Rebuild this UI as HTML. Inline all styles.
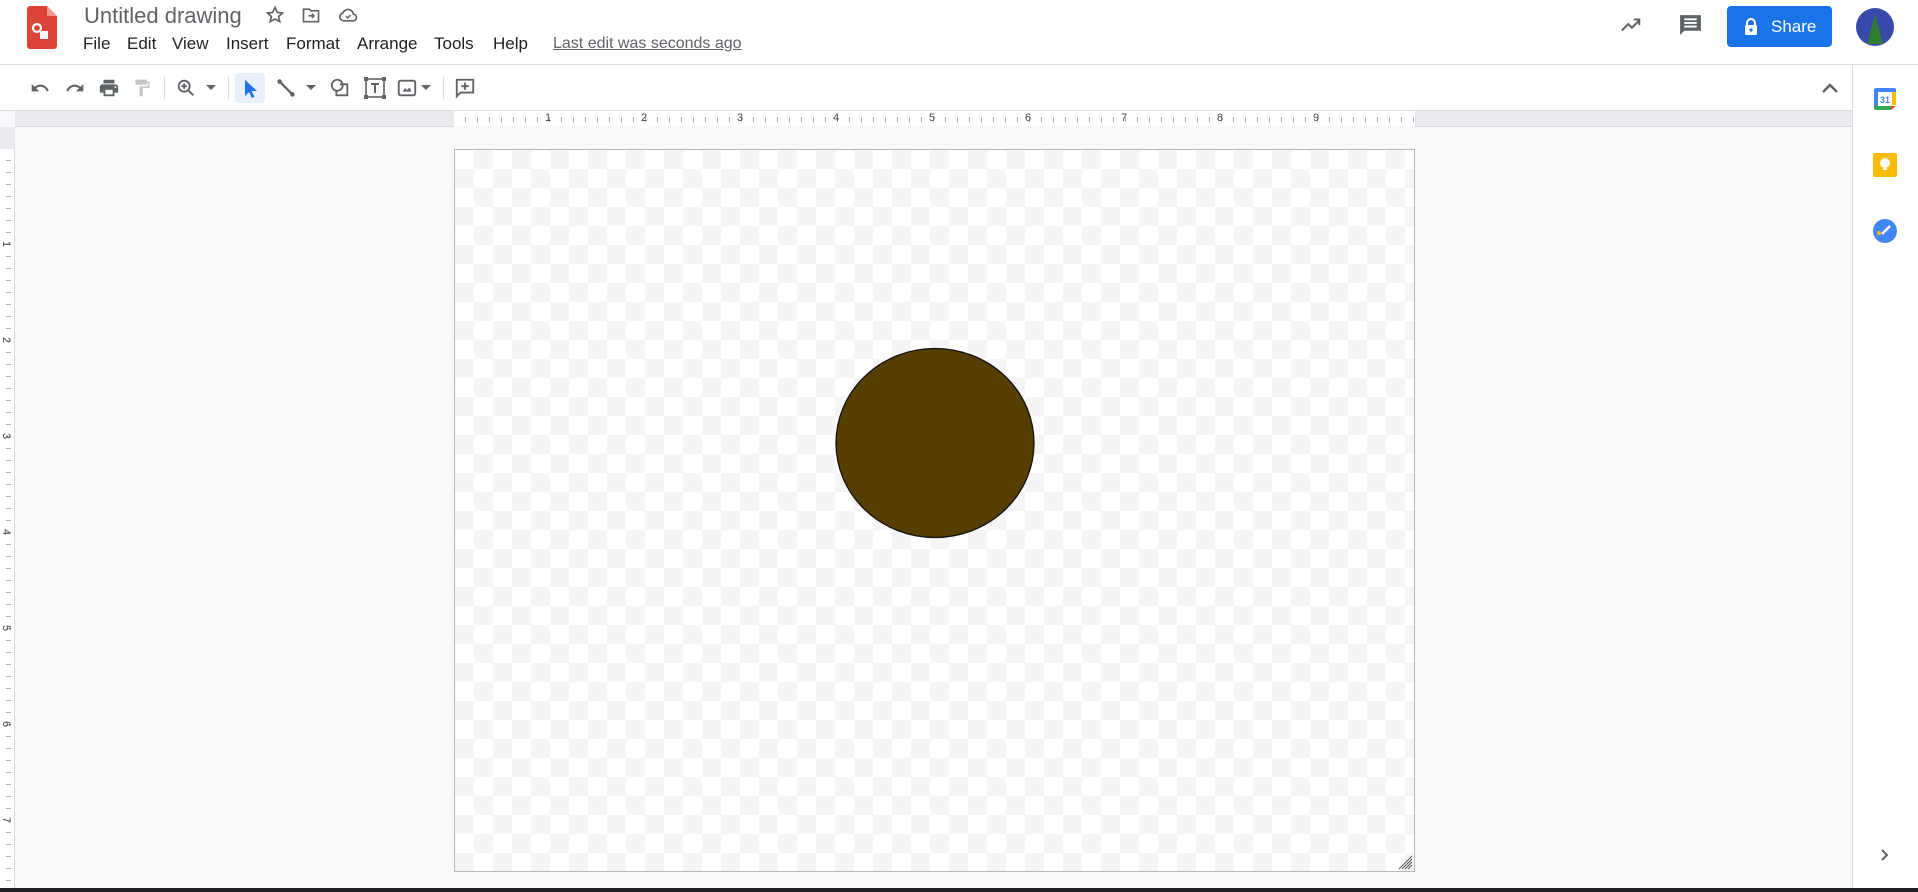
<!DOCTYPE html>
<html><head><meta charset="utf-8"><style>
*{margin:0;padding:0;box-sizing:border-box}
body{width:1918px;height:892px;overflow:hidden;background:#f8f9fa;font-family:"Liberation Sans",Arial,sans-serif;position:relative}
.abs{position:absolute}
#hdr{left:0;top:0;width:1918px;height:65px;background:#fff;border-bottom:1px solid #dadce0}
#tb{left:0;top:65px;width:1852px;height:46px;background:#fff;border-bottom:1px solid #dadce0}
.menu{top:34px;font-size:17px;color:#202124}
#rul{left:15px;top:111px;width:1837px;height:16px;background:#e8eaed;border-bottom:1px solid #dadce0}
#rulw{left:454px;top:111px;width:961px;height:16px;background:#fff repeating-linear-gradient(90deg,transparent 0 11px,#b0b0b0 11px 12px) ;background-size:12px 5px;background-repeat:repeat-x;background-position:0 6px}
.rn{font-size:11px;color:#444;top:112px}
#vr{left:0;top:127px;width:15px;height:761px;background:#fff;border-right:1px solid #dadce0}
.vn{font-size:11px;color:#444;left:3px;transform:rotate(90deg)}
#canvas{left:454px;top:149px;width:961px;height:723px;border:1px solid #b8b8b8;background-color:#fff;
background-image:linear-gradient(45deg,#f5f5f5 25%,transparent 25%,transparent 75%,#f5f5f5 75%),linear-gradient(45deg,#f5f5f5 25%,transparent 25%,transparent 75%,#f5f5f5 75%);
background-size:38px 38px;background-position:0 0,19px 19px}
#side{left:1852px;top:65px;width:66px;height:823px;background:#fff;border-left:1px solid #dadce0}
#bot{left:0;top:888px;width:1918px;height:4px;background:#202124}
.sep{width:1px;height:24px;background:#dadce0;top:76px}
</style></head><body>
<div id="hdr" class="abs"></div>
<svg class="abs" style="left:27px;top:6px" width="30" height="43" viewBox="0 0 30 43"><path d="M3 0h17l10 10v30a3 3 0 0 1-3 3H3a3 3 0 0 1-3-3V3a3 3 0 0 1 3-3z" fill="#db4437"/><path d="M20 0v10h10z" fill="#f19990"/><circle cx="10" cy="22" r="4" fill="none" stroke="#fff" stroke-width="2.2"/><rect x="13" y="25" width="8" height="8" fill="#fff"/></svg>
<div class="abs" style="left:84px;top:3px;font-size:22px;color:#5f6368">Untitled drawing</div>
<svg class="abs" style="left:265px;top:5px" width="20" height="20" viewBox="0 0 24 24"><path d="M12 3l2.8 6 6.2.6-4.7 4.2 1.4 6.2L12 16.8 6.3 20l1.4-6.2L3 9.6 9.2 9z" fill="none" stroke="#5f6368" stroke-width="2"/></svg>
<svg class="abs" style="left:301px;top:5px" width="20" height="20" viewBox="0 0 24 24"><path d="M3 5h7l2 2h9v13H3z" fill="none" stroke="#5f6368" stroke-width="2"/><path d="M9 13h6m-2-2.5L15.5 13 13 15.5" fill="none" stroke="#5f6368" stroke-width="2"/></svg>
<svg class="abs" style="left:337px;top:5px" width="22" height="20" viewBox="0 0 24 24"><path d="M7 19h11a4 4 0 0 0 .5-8A6.5 6.5 0 0 0 6 9.5 4.8 4.8 0 0 0 7 19z" fill="none" stroke="#5f6368" stroke-width="2"/><path d="M9.5 13.5l2 2 3.5-3.5" fill="none" stroke="#5f6368" stroke-width="1.8"/></svg>
<div class="abs menu" style="left:83px">File</div>
<div class="abs menu" style="left:127px">Edit</div>
<div class="abs menu" style="left:172px">View</div>
<div class="abs menu" style="left:226px">Insert</div>
<div class="abs menu" style="left:286px">Format</div>
<div class="abs menu" style="left:357px">Arrange</div>
<div class="abs menu" style="left:434px">Tools</div>
<div class="abs menu" style="left:493px">Help</div>
<div class="abs menu" style="left:553px;color:#5f6368;text-decoration:underline;font-size:16px;top:35px">Last edit was seconds ago</div>
<svg class="abs" style="left:1618px;top:14px" width="26" height="22" viewBox="0 0 24 24"><path d="M2 18l7-7 4 4 8-8M15 6h6v6" fill="none" stroke="#5f6368" stroke-width="2.2"/></svg>
<svg class="abs" style="left:1678px;top:13px" width="25" height="25" viewBox="0 0 24 24"><path d="M2 2h20v15H6l-4 4z" fill="#5f6368"/><path d="M6 6h12M6 9.5h12M6 13h12" stroke="#fff" stroke-width="1.8"/></svg>
<div class="abs" style="left:1727px;top:6px;width:105px;height:41px;background:#1a73e8;border-radius:4px;color:#fff;font-size:17px;line-height:41px;padding-left:44px">Share</div>
<svg class="abs" style="left:1744px;top:18px" width="14" height="17" viewBox="0 0 14 17"><path d="M3 7V5a4 4 0 0 1 8 0v2" fill="none" stroke="#fff" stroke-width="2"/><rect x="1" y="7" width="12" height="10" rx="1.5" fill="#fff"/><circle cx="7" cy="12" r="1.6" fill="#1a73e8"/></svg>
<div class="abs" style="left:1856px;top:8px;width:38px;height:38px;border-radius:50%;background:#3949ab;overflow:hidden"><div style="position:absolute;left:11px;top:6px;width:0;height:0;border-left:8px solid transparent;border-right:8px solid transparent;border-bottom:30px solid #2e7d32"></div></div>
<div id="tb" class="abs"></div>
<svg class="abs" style="left:29px;top:78px" width="22" height="20" viewBox="0 0 24 24"><path d="M12.5 8c-2.6 0-5 1-6.9 2.6L2 7v9h9l-3.6-3.6c1.4-1.2 3.2-1.9 5.1-1.9 3.5 0 6.5 2.3 7.6 5.5l2.4-.8C21 11 17.1 8 12.5 8z" fill="#5f6368"/></svg>
<svg class="abs" style="left:64px;top:78px" width="22" height="20" viewBox="0 0 24 24"><path d="M18.4 10.6C16.5 9 14.1 8 11.5 8 6.9 8 3 11 1.6 15.2l2.4.8c1.1-3.2 4.1-5.5 7.6-5.5 1.9 0 3.7.7 5.1 1.9L13 16h9V7z" fill="#5f6368"/></svg>
<svg class="abs" style="left:98px;top:77px" width="22" height="22" viewBox="0 0 24 24"><path d="M19 8H5c-1.7 0-3 1.3-3 3v6h4v4h12v-4h4v-6c0-1.7-1.3-3-3-3zm-3 11H8v-5h8zm3-7a1 1 0 1 1 0-2 1 1 0 0 1 0 2zM18 3H6v4h12z" fill="#5f6368"/></svg>
<svg class="abs" style="left:132px;top:77px" width="20" height="22" viewBox="0 0 24 24"><path d="M18 4V3c0-.6-.4-1-1-1H5c-.6 0-1 .4-1 1v4c0 .6.4 1 1 1h12c.6 0 1-.4 1-1V6h1v4H9v11c0 .6.4 1 1 1h2c.6 0 1-.4 1-1v-9h8V4z" fill="#c4c7c5"/></svg>
<div class="abs sep" style="left:164px"></div>
<svg class="abs" style="left:175px;top:77px" width="22" height="22" viewBox="0 0 24 24"><circle cx="10" cy="10" r="6" fill="none" stroke="#5f6368" stroke-width="2"/><path d="M14.5 14.5L20 20M10 7v6M7 10h6" stroke="#5f6368" stroke-width="2"/></svg>
<svg class="abs" style="left:206px;top:85px" width="10" height="6"><path d="M0 0h10L5 5z" fill="#5f6368"/></svg>
<div class="abs sep" style="left:228px"></div>
<div class="abs" style="left:235px;top:73px;width:30px;height:30px;background:#e8f0fe;border-radius:3px"></div>
<svg class="abs" style="left:243px;top:79px" width="16" height="20" viewBox="0 0 16 20"><path d="M2 1v16l4-4 3 6 2.5-1.2-3-5.8H14z" fill="#1a73e8"/></svg>
<svg class="abs" style="left:275px;top:77px" width="22" height="22" viewBox="0 0 24 24"><path d="M4 4l16 16" stroke="#5f6368" stroke-width="2.4"/><circle cx="5" cy="5" r="2.5" fill="#5f6368"/><circle cx="19" cy="19" r="2.5" fill="#5f6368"/></svg>
<svg class="abs" style="left:306px;top:85px" width="10" height="6"><path d="M0 0h10L5 5z" fill="#5f6368"/></svg>
<svg class="abs" style="left:329px;top:77px" width="22" height="22" viewBox="0 0 24 24"><circle cx="9" cy="9" r="6" fill="none" stroke="#5f6368" stroke-width="2"/><path d="M12 8h8v12H8v-5" fill="none" stroke="#5f6368" stroke-width="2"/></svg>
<svg class="abs" style="left:363px;top:76px" width="24" height="24" viewBox="0 0 24 24"><rect x="3" y="3" width="18" height="18" fill="none" stroke="#5f6368" stroke-width="1.6"/><path d="M8 8h8M12 8v9" stroke="#5f6368" stroke-width="2"/><g fill="#5f6368"><rect x="1" y="1" width="4" height="4"/><rect x="19" y="1" width="4" height="4"/><rect x="1" y="19" width="4" height="4"/><rect x="19" y="19" width="4" height="4"/></g></svg>
<svg class="abs" style="left:396px;top:77px" width="22" height="22" viewBox="0 0 24 24"><rect x="3" y="4" width="18" height="16" rx="2" fill="none" stroke="#5f6368" stroke-width="2"/><path d="M7 16l3-4 2 2.5 2.5-3L17 16z" fill="#5f6368"/></svg>
<svg class="abs" style="left:421px;top:85px" width="10" height="6"><path d="M0 0h10L5 5z" fill="#5f6368"/></svg>
<div class="abs sep" style="left:443px"></div>
<svg class="abs" style="left:454px;top:77px" width="22" height="22" viewBox="0 0 24 24"><path d="M3 3h18v14H7l-4 4z" fill="none" stroke="#5f6368" stroke-width="2"/><path d="M12 6v8M8 10h8" stroke="#5f6368" stroke-width="2"/></svg>
<svg class="abs" style="left:1821px;top:82px" width="18" height="12" viewBox="0 0 18 12"><path d="M2 10l7-7 7 7" fill="none" stroke="#5f6368" stroke-width="2.4"/></svg>
<div id="rul" class="abs"></div>
<div id="rulw" class="abs"></div>
<div class="abs rn" style="left:545px">1</div><div class="abs rn" style="left:641px">2</div><div class="abs rn" style="left:737px">3</div><div class="abs rn" style="left:833px">4</div><div class="abs rn" style="left:929px">5</div><div class="abs rn" style="left:1025px">6</div><div class="abs rn" style="left:1121px">7</div><div class="abs rn" style="left:1217px">8</div><div class="abs rn" style="left:1313px">9</div>
<div id="vr" class="abs" style="background:#fff repeating-linear-gradient(180deg,transparent 0 11px,#b0b0b0 11px 12px);background-size:5px 12px;background-repeat:repeat-y;background-position:6px 22px"></div>
<div class="abs" style="left:0;top:127px;width:15px;height:22px;background:#e8eaed"></div>
<div class="abs vn" style="top:238px">1</div><div class="abs vn" style="top:334px">2</div><div class="abs vn" style="top:430px">3</div><div class="abs vn" style="top:526px">4</div><div class="abs vn" style="top:622px">5</div><div class="abs vn" style="top:718px">6</div><div class="abs vn" style="top:814px">7</div>
<div id="canvas" class="abs"></div>
<svg class="abs" style="left:1397px;top:854px" width="16" height="16" viewBox="0 0 16 16"><path d="M2 15L15 2M5 15L15 5M8 15l7-7M11 15l4-4" stroke="#555" stroke-width="1"/></svg>
<svg class="abs" style="left:834px;top:347px" width="202" height="192"><ellipse cx="101" cy="96" rx="99" ry="94.5" fill="#553e00" stroke="#111" stroke-width="1.3"/></svg>
<div id="side" class="abs"></div>
<svg class="abs" style="left:1873px;top:87px" width="24" height="24" viewBox="0 0 24 24"><rect x="1" y="1" width="22" height="22" rx="2" fill="#fff"/><path d="M1 5h22V3a2 2 0 0 0-2-2H3a2 2 0 0 0-2 2z" fill="#4285f4"/><path d="M1 5v14h4V5z" fill="#4285f4"/><path d="M1 19h17v4H3a2 2 0 0 1-2-2z" fill="#34a853"/><path d="M19 5h4v13h-4z" fill="#fbbc04"/><path d="M18 19h5l-5 4z" fill="#ea4335"/><text x="12" y="16" font-size="9" font-family="Liberation Sans" fill="#4285f4" text-anchor="middle" font-weight="bold">31</text></svg>
<svg class="abs" style="left:1873px;top:153px" width="24" height="24" viewBox="0 0 24 24"><rect x="0" y="0" width="24" height="24" rx="2" fill="#fbbc04"/><circle cx="12" cy="10" r="5" fill="#fff"/><rect x="10" y="15" width="4" height="2" fill="#fff"/></svg>
<svg class="abs" style="left:1873px;top:219px" width="24" height="24" viewBox="0 0 24 24"><circle cx="12" cy="12" r="12" fill="#4285f4"/><path d="M9 15l8-8" stroke="#fff" stroke-width="2.5"/><circle cx="6" cy="14" r="2" fill="#fbbc04"/></svg>
<svg class="abs" style="left:1880px;top:848px" width="10" height="14" viewBox="0 0 10 14"><path d="M2 2l5 5-5 5" fill="none" stroke="#5f6368" stroke-width="2"/></svg>
<div id="bot" class="abs"></div>
</body></html>
